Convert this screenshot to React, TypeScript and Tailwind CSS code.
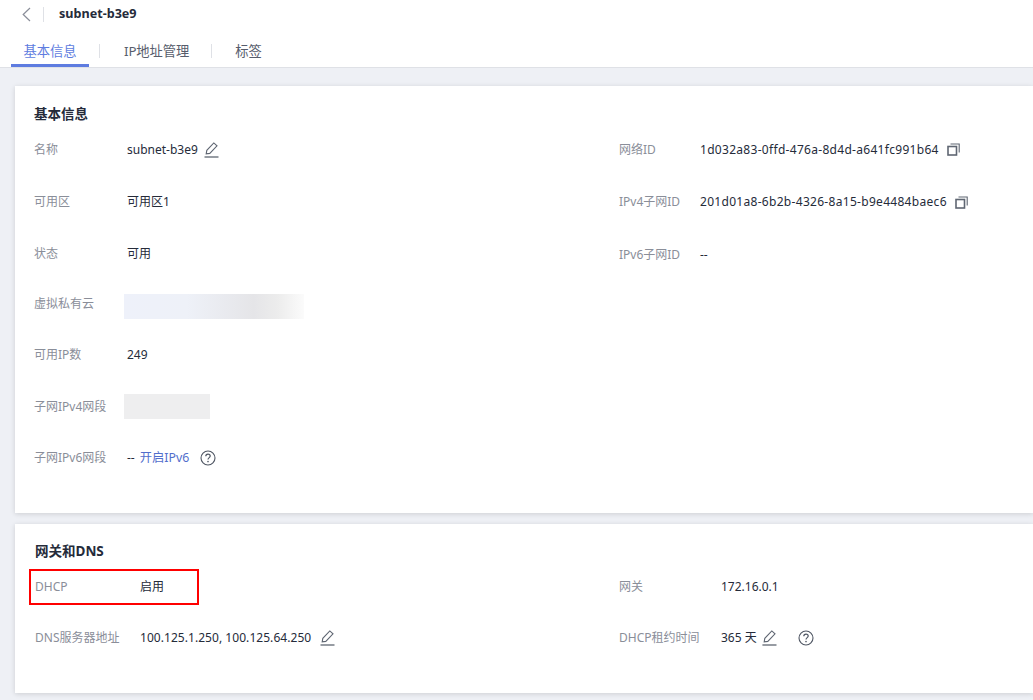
import type { ReactNode } from 'react';

const font = { fontFamily: '"Noto Sans", "Noto Sans CJK SC", sans-serif' };

function BackIcon() {
  return (
    <svg width="9" height="15" viewBox="0 0 9 15" fill="none" stroke="#8a8e99" strokeWidth="1.2" className="shrink-0">
      <path d="M8 1 L1.2 7.5 L8 14" />
    </svg>
  );
}

function PencilIcon() {
  return (
    <svg width="15" height="16" viewBox="0 0 15 16" fill="none" stroke="#5f6672" strokeWidth="1.1" className="shrink-0">
      <path d="M2.2 11.8 L2.8 8.3 L9.8 0.9 L13 3.8 L5.8 11.4 Z" />
      <path d="M0.5 15 H14.5" strokeWidth="1.3" />
    </svg>
  );
}

function CopyIcon() {
  return (
    <svg width="13" height="13" viewBox="0 0 13 13" fill="none" stroke="#5f6672" className="shrink-0">
      <rect x="1" y="3.5" width="8.5" height="8.5" strokeWidth="1.6" />
      <path d="M3.5 1 H12.2 V9.5" strokeWidth="1.1" />
    </svg>
  );
}

function HelpIcon() {
  return (
    <svg width="16" height="16" viewBox="0 0 16 16" fill="none" stroke="#4f5663" className="shrink-0">
      <circle cx="8" cy="8" r="7" strokeWidth="1.1" />
      <path d="M5.8 6.3 C5.8 4.9 6.8 4.2 8 4.2 C9.3 4.2 10.2 5 10.2 6.1 C10.2 7.6 8 7.7 8 9.6" strokeWidth="1.2" />
      <circle cx="8" cy="11.6" r="0.8" fill="#4f5663" stroke="none" />
    </svg>
  );
}

function Row({ label, width, height = 'h-[52px]', children }: { label: string; width: string; height?: string; children: ReactNode }) {
  return (
    <div className={`flex items-center ${height}`}>
      <div className={`${width} shrink-0 text-[#8a8e99]`}>{label}</div>
      <div className="flex items-center text-[#252b3a]">{children}</div>
    </div>
  );
}

export default function App() {
  return (
    <div className="h-[700px] w-[1033px] overflow-hidden bg-[#eef0f5] text-xs" style={font}>
      <div className="h-[68px] border-b border-[#dfe1e6] bg-white">
        <div className="flex h-[28px] items-center pl-[22px]">
          <BackIcon />
          <div className="ml-[12px] h-[15px] w-px bg-[#dfe1e6]" />
          <div className="ml-[15px] text-[12.6px] font-bold text-[#252b3a]">subnet-b3e9</div>
        </div>
        <div className="mt-[8px] flex h-[31px] items-start pl-[11px] text-[13.3px]">
          <div className="h-[31px] w-[78px] border-b-[3px] border-[#5e7ce0] text-center leading-[30px] text-[#5e7ce0]">基本信息</div>
          <div className="mt-[8px] ml-[10px] h-[14px] w-px bg-[#dfe1e6]" />
          <div className="ml-[24px] leading-[30px] tracking-[-0.1px] text-[#575d6c]">IP地址管理</div>
          <div className="mt-[8px] ml-[22px] h-[14px] w-px bg-[#dfe1e6]" />
          <div className="ml-[23px] leading-[30px] text-[#575d6c]">标签</div>
        </div>
      </div>

      <div className="mt-[18px] ml-[15px] h-[427px] bg-white pt-[20px] pl-[19px] shadow-[0_1px_5px_rgba(0,0,0,0.14)]">
        <div className="text-[13.5px] leading-[17px] font-bold text-[#252b3a]">基本信息</div>
        <div className="flex">
          <div className="w-[585px] shrink-0">
            <Row label="名称" width="w-[93px]" height="h-[53px]">
              subnet-b3e9
              <span className="ml-[6px]"><PencilIcon /></span>
            </Row>
            <Row label="可用区" width="w-[93px]">可用区1</Row>
            <Row label="状态" width="w-[93px]">可用</Row>
            <Row label="虚拟私有云" width="w-[90px]" height="h-[48px]">
              <div className="mt-[5px] h-[25px] w-[180px] bg-[linear-gradient(90deg,#eef1fa_0%,#eef1f8_35%,#e5e5e8_72%,#ececec_85%,#fbfbfb_100%)]" />
            </Row>
            <Row label="可用IP数" width="w-[93px]" height="h-[54px]">249</Row>
            <Row label="子网IPv4网段" width="w-[90px]" height="h-[50px]">
              <div className="mb-[2px] h-[25px] w-[86px] bg-[#eeeeef]" />
            </Row>
            <Row label="子网IPv6网段" width="w-[93px]">
              -- <span className="ml-[5px] text-[12.3px] text-[#526ecc]">开启IPv6</span>
              <span className="ml-[11px]"><HelpIcon /></span>
            </Row>
          </div>
          <div>
            <Row label="网络ID" width="w-[81px]" height="h-[53px]">
              <span className="tracking-[0.3px]">1d032a83-0ffd-476a-8d4d-a641fc991b64</span>
              <span className="ml-[8px]"><CopyIcon /></span>
            </Row>
            <Row label="IPv4子网ID" width="w-[81px]">
              <span className="tracking-[0.3px]">201d01a8-6b2b-4326-8a15-b9e4484baec6</span>
              <span className="ml-[8px]"><CopyIcon /></span>
            </Row>
            <Row label="IPv6子网ID" width="w-[81px]" height="h-[54px]">--</Row>
          </div>
        </div>
      </div>

      <div className="relative mt-[11px] ml-[15px] h-[169px] bg-white pt-[17px] pl-[20px] shadow-[0_1px_5px_rgba(0,0,0,0.14)]">
        <div className="text-[13.5px] leading-[20px] font-bold text-[#252b3a]">网关和DNS</div>
        <div className="flex">
          <div className="w-[584px] shrink-0">
            <Row label="DHCP" width="w-[105px]">启用</Row>
            <Row label="DNS服务器地址" width="w-[105px]" height="h-[50px]">
              <span className="tracking-[0.05px]">100.125.1.250, 100.125.64.250</span>
              <span className="ml-[9px]"><PencilIcon /></span>
            </Row>
          </div>
          <div>
            <Row label="网关" width="w-[102px]">172.16.0.1</Row>
            <Row label="DHCP租约时间" width="w-[102px]" height="h-[50px]">
              365 天
              <span className="ml-[5px]"><PencilIcon /></span>
              <span className="ml-[21px]"><HelpIcon /></span>
            </Row>
          </div>
        </div>
        <div className="absolute top-[45px] left-[14px] h-[36px] w-[170px] border-2 border-[#ff0000]" />
      </div>
    </div>
  );
}
